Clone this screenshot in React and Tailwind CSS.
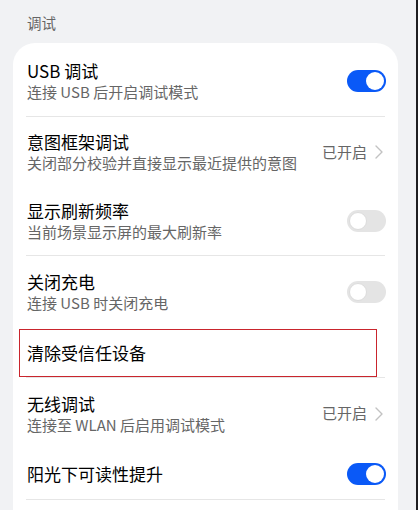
const FONT = { fontFamily: '"Noto Sans CJK SC", "Noto Sans", sans-serif' }

function Toggle({ on }) {
  return on ? (
    <div className="w-[39px] h-[22px] rounded-full bg-[#0a59f7] flex items-center justify-end pr-[2px] shrink-0">
      <div className="w-[18px] h-[18px] rounded-full bg-white" />
    </div>
  ) : (
    <div className="w-[39px] h-[22px] rounded-full bg-[#e4e4e4] flex items-center pl-[2px] shrink-0">
      <div className="w-[18px] h-[18px] rounded-full bg-white border border-[#dcdcdc]" />
    </div>
  )
}

function Status() {
  return (
    <div className="flex items-center gap-[8px] shrink-0 mr-[3px] text-[15px] text-[#666666]">
      <span>已开启</span>
      <svg width="8" height="14" viewBox="0 0 8 14" fill="none">
        <path d="M1 1 L7 7 L1 13" stroke="#c2c2c2" strokeWidth="1.4" strokeLinecap="round" strokeLinejoin="round" />
      </svg>
    </div>
  )
}

function Row({ title, sub, right, h }) {
  return (
    <div className={`flex items-center justify-between pl-[14px] pr-[12px] ${h}`}>
      <div className="flex flex-col">
        <span className="text-[17px] leading-[22px] text-black">{title}</span>
        {sub && <span className="text-[15px] leading-[20px] text-[#666666]">{sub}</span>}
      </div>
      {right}
    </div>
  )
}

function Divider() {
  return <div className="mx-[13px] h-px bg-[#e6e6e6]" />
}

export default function App() {
  return (
    <div className="w-[418px] h-[510px] flex overflow-hidden" style={FONT}>
      <div className="flex-1 bg-[#f1f2f4] flex flex-col">
        {/* Заголовок секции */}
        <div className="h-[43px] pt-[12px] pl-[27px] text-[14.5px] leading-[21px] text-[#666666]">调试</div>

        <div className="ml-[13px] w-[385px] flex-1 bg-white rounded-t-[22px]">
          <Row h="h-[73px] pt-[2px]" title="USB 调试" sub="连接 USB 后开启调试模式" right={<Toggle on />} />
          <Divider />
          <Row h="h-[70px]" title="意图框架调试" sub="关闭部分校验并直接显示最近提供的意图" right={<Status />} />
          <Row h="h-[68px]" title="显示刷新频率" sub="当前场景显示屏的最大刷新率" right={<Toggle />} />
          <Divider />
          <Row h="h-[71px]" title="关闭充电" sub="连接 USB 时关闭充电" right={<Toggle />} />
          <div className="h-[50px] pt-[2px]">
            <div className="ml-[6px] w-[358px] h-[48px] border border-[#c9252d] flex items-center pl-[7px]">
              <span className="text-[17px] leading-[22px] text-black">清除受信任设备</span>
            </div>
          </div>
          <Divider />
          <Row h="h-[71px]" title="无线调试" sub="连接至 WLAN 后启用调试模式" right={<Status />} />
          <Row h="h-[50px]" title="阳光下可读性提升" right={<Toggle on />} />
          <Divider />
        </div>
      </div>
      <div className="w-[2px] bg-[#1f1f21]" />
    </div>
  )
}
